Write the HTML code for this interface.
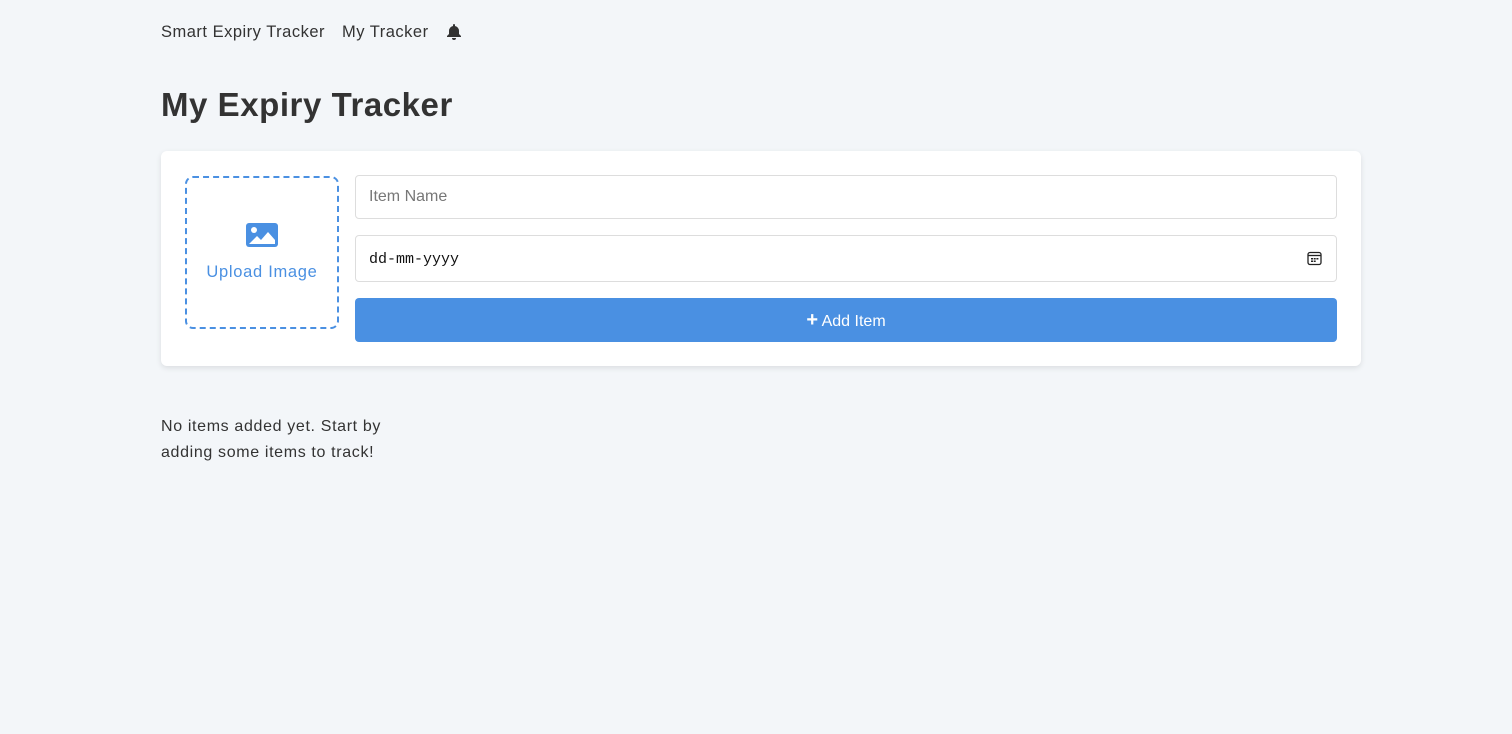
<!DOCTYPE html>
<html><head><style>
body{margin:0;background:#f3f6f9;font-family:"Liberation Sans",sans-serif;color:#333;width:1512px;height:734px;position:relative;overflow:hidden}
.a{position:absolute}
.nav{top:23px;font-size:16.5px;color:#333;letter-spacing:0.5px}
h1{position:absolute;left:161px;top:86px;margin:0;font-size:33px;font-weight:bold;color:#333;letter-spacing:0.55px}
.card{left:161px;top:151px;width:1200px;height:215px;background:#fff;border-radius:6px;box-shadow:0 2px 6px rgba(0,0,0,.1)}
.up{left:185px;top:176px;width:150px;height:149px;border:2px dashed #4a90e2;border-radius:8px}
.inp{left:355px;width:980px;border:1px solid #ddd;border-radius:4px;background:#fff}
.btn{left:355px;top:298px;width:982px;height:44px;background:#4a90e2;border-radius:4px;color:#fff;font-size:16px;text-align:center;line-height:44px}
</style></head><body>
<div class="a nav" style="left:161px">Smart Expiry Tracker</div>
<div class="a nav" style="left:342px">My Tracker</div>
<svg class="a" style="left:446px;top:23px" width="16" height="17" viewBox="0 0 16 17"><path d="M8 1a1 1 0 0 1 1 1v1a5 5 0 0 1 4 5v3l2 2v1H1v-1l2-2V8a5 5 0 0 1 4-5V2a1 1 0 0 1 1-1z" fill="#333"/><path d="M6 15h4a2 2 0 0 1-4 0z" fill="#333"/></svg>
<h1>My Expiry Tracker</h1>
<div class="a card"></div>
<div class="a up"></div>
<svg class="a" style="left:246px;top:223px" width="32" height="24" viewBox="0 0 32 24"><rect width="32" height="24" rx="3" fill="#4a90e2"/><circle cx="8" cy="7" r="3" fill="#fff"/><path d="M3 21l8-8 4 4 7-8 7 8v4z" fill="#fff"/></svg>
<div class="a" style="left:186px;top:263px;width:152px;text-align:center;color:#4a90e2;font-size:16.5px;letter-spacing:0.7px">Upload Image</div>
<div class="a inp" style="top:175px;height:42px"><span style="position:absolute;left:13px;top:12px;color:#777;font-size:16px">Item Name</span></div>
<div class="a inp" style="top:235px;height:45px"><span style="position:absolute;left:13px;top:15px;font-family:'Liberation Mono',monospace;font-size:15px;color:#111">dd-mm-yyyy</span>
<svg style="position:absolute;left:951px;top:15px" width="15" height="15" viewBox="0 0 15 15"><rect x="1" y="1.5" width="13" height="12" rx="2" fill="none" stroke="#222" stroke-width="1.3"/><path d="M1 4.5h13" stroke="#222" stroke-width="1.3"/><g fill="#222"><rect x="4" y="7" width="2" height="1.5"/><rect x="6.7" y="7" width="2" height="1.5"/><rect x="9.4" y="7" width="2" height="1.5"/><rect x="4" y="9.5" width="2" height="1.5"/><rect x="6.7" y="9.5" width="2" height="1.5"/></g></svg></div>
<div class="a btn"><b style="font-size:20px">+</b> Add Item</div>
<div class="a" style="left:161px;top:414px;font-size:16px;line-height:26px;color:#333;letter-spacing:0.65px">No items added yet. Start by<br>adding some items to track!</div>
</body></html>
